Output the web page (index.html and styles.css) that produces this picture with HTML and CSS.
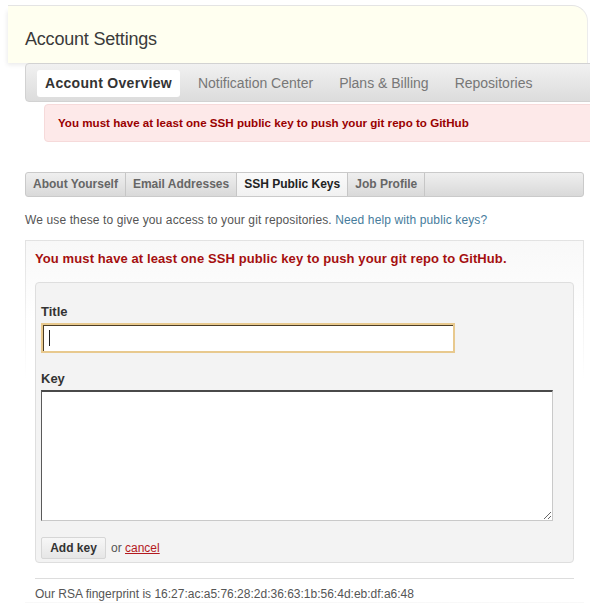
FILE: index.html
```
<!DOCTYPE html>
<html>
<head>
<meta charset="utf-8">
<link rel="stylesheet" href="styles.css">
</head>
<body>
<div class="page">
  <div class="header">
    <h1 class="title">Account Settings</h1>
  </div>
  <div class="tabbar">
    <a class="tab tab-active">Account Overview</a>
    <a class="tab">Notification Center</a>
    <a class="tab">Plans &amp; Billing</a>
    <a class="tab">Repositories</a>
  </div>
  <div class="flash">You must have at least one SSH public key to push your git repo to GitHub</div>

  <div class="subnav">
    <a class="subtab">About Yourself</a>
    <a class="subtab">Email Addresses</a>
    <a class="subtab subtab-active">SSH Public Keys</a>
    <a class="subtab">Job Profile</a>
  </div>

  <p class="desc">We use these to give you access to your git repositories. <a class="help">Need help with public keys?</a></p>

  <div class="keys">
    <p class="error">You must have at least one SSH public key to push your git repo to GitHub.</p>
    <form class="form">
      <label class="label">Title</label>
      <div class="field">
        <input class="input" type="text">
        <span class="caret"></span>
      </div>
      <label class="label label-key">Key</label>
      <textarea class="textarea"></textarea>
      <div class="actions">
        <button type="button" class="btn">Add key</button>
        <span class="or">or <a class="cancel">cancel</a></span>
      </div>
    </form>
    <div class="rule"></div>
    <p class="fingerprint">Our RSA fingerprint is 16:27:ac:a5:76:28:2d:36:63:1b:56:4d:eb:df:a6:48</p>
  </div>
</div>
</body>
</html>
```
FILE: styles.css
```
html, body {
  margin: 0;
  padding: 0;
  background: #fff;
  overflow: hidden;
}
body {
  font-family: "Liberation Sans", Arial, sans-serif;
  color: #333;
  width: 590px;
}
.page {
  width: 590px;
  overflow: hidden;
  padding-bottom: 20px;
}
.header {
  margin: 5px 2px 0 8px;
  height: 57px;
  background: #fffff0;
  border-top: 1px solid #e4e4e4;
  border-right: 1px solid #ececec;
  border-radius: 0 16px 0 0;
  padding-left: 17px;
  box-shadow: -3px 4px 4px -2px rgba(0,0,0,0.08);
}
.title {
  margin: 0;
  padding-top: 21px;
  font-size: 18px;
  font-weight: normal;
  line-height: 24px;
  color: #3a3a3a;
  letter-spacing: -0.2px;
}
.tabbar {
  margin-left: 25px;
  width: 600px;
  height: 31px;
  border: 1px solid #d2d2d2;
  border-radius: 4px 0 0 4px;
  background: linear-gradient(#f1f1f1, #dcdcdc);
  display: flex;
  align-items: flex-start;
  gap: 10px;
  padding: 6px 0 0 11px;
  box-sizing: content-box;
}
.tab {
  display: block;
  height: 27px;
  line-height: 27px;
  padding: 0 8px;
  font-size: 14px;
  color: #777;
}
.tab-active {
  background: #fff;
  border-radius: 3px;
  font-weight: bold;
  color: #333;
  letter-spacing: 0.3px;
}
.flash {
  margin: 2px 0 0 44px;
  width: 600px;
  height: 36px;
  line-height: 36px;
  padding-left: 13px;
  background: #fde9e9;
  border: 1px solid #f6dada;
  border-radius: 4px 0 0 4px;
  font-size: 11.6px;
  font-weight: bold;
  color: #900;
}
.subnav {
  margin: 30px 0 0 25px;
  width: 557px;
  height: 23px;
  border: 1px solid #cacaca;
  border-radius: 3px;
  background: linear-gradient(#efefef, #d9d9d9);
  display: flex;
}
.subtab {
  display: block;
  height: 23px;
  line-height: 23px;
  padding: 0 7px;
  border-right: 1px solid #c6c6c6;
  font-size: 12px;
  font-weight: bold;
  color: #666;
}
.subtab-active {
  background: linear-gradient(#fafafa, #f1f1f1);
  color: #222;
}
.desc {
  margin: 15px 0 0 25px;
  font-size: 12px;
  line-height: 16px;
  color: #555;
  letter-spacing: 0.12px;
}
.help {
  color: #467c9c;
}
.keys {
  margin: 12px 0 0 25px;
  width: 539px;
  padding: 9px 9px 0 9px;
  border: 1px solid transparent;
  border-image: linear-gradient(to bottom, #e2e2e2, rgba(230,230,230,0) 140px) 1;
  background: linear-gradient(#f8f8f8, #fff 80px);
}
.error {
  margin: 0;
  font-size: 13px;
  line-height: 18px;
  font-weight: bold;
  color: #a50f0f;
  letter-spacing: 0.1px;
}
.form {
  margin: 14px 0 0 0;
  height: 258px;
  padding: 21px 5px 0 5px;
  background: #f3f3f3;
  border: 1px solid #dedede;
  border-radius: 4px;
}
.label {
  display: block;
  font-size: 13px;
  line-height: 16px;
  font-weight: bold;
  color: #333;
}
.field {
  position: relative;
  margin-top: 3px;
  width: 414px;
  height: 30px;
}
.input {
  display: block;
  width: 414px;
  height: 30px;
  margin: 0;
  box-sizing: border-box;
  border: 2px solid #e8c98e;
  box-shadow: inset 1px 1px 0 #4b3d26;
  background: #fff;
  outline: none;
}
.caret {
  position: absolute;
  left: 8px;
  top: 7px;
  width: 1px;
  height: 16px;
  background: #222;
}
.label-key {
  margin-top: 18px;
}
.textarea {
  display: block;
  margin: 3px 0 0 0;
  width: 512px;
  height: 131px;
  box-sizing: border-box;
  border-style: solid;
  border-width: 2px 1px 1px 1px;
  border-color: #4a4a4a #c9c9c9 #c9c9c9 #5a5a5a;
  background: #fff;
  resize: both;
}
.actions {
  margin-top: 16px;
  display: flex;
  align-items: center;
}
.btn {
  width: 65px;
  height: 22px;
  padding: 0;
  margin: 0;
  border: 1px solid #d6d6d6;
  border-radius: 2px;
  background: linear-gradient(#f7f7f7, #e6e6e6);
  font-family: "Liberation Sans", Arial, sans-serif;
  font-size: 12px;
  font-weight: bold;
  color: #333;
}
.or {
  margin-left: 5px;
  font-size: 12px;
  color: #555;
}
.cancel {
  color: #b3191e;
  text-decoration: underline;
}
.rule {
  margin-top: 15px;
  height: 1px;
  background: #dddddd;
}
.fingerprint {
  margin: 7px 0 0 0;
  font-size: 12px;
  line-height: 16px;
  color: #555;
}
```
